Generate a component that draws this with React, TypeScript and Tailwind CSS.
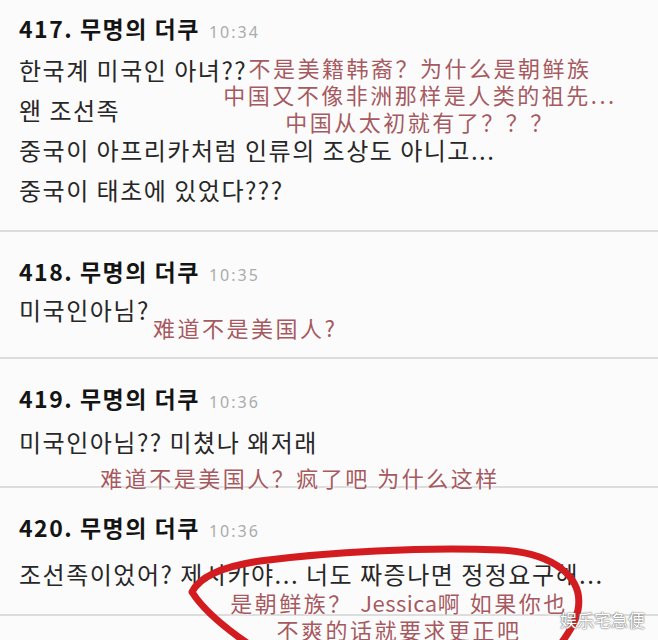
import React from "react";

function Header({ num, time }: { num: string; time: string }) {
  return (
    <div className="flex items-baseline gap-[9px] h-[28px] leading-[28px]">
      <span className="font-['Noto_Sans_CJK_KR','Noto_Sans_CJK_SC',sans-serif] font-bold text-[23px] tracking-[1.5px] text-[#141414]">
        {num}. 무명의 더쿠
      </span>
      <span className="font-['Noto_Sans',sans-serif] text-[16px] tracking-[2px] text-[#ababab]">
        {time}
      </span>
    </div>
  );
}

function Body({ children }: { children: React.ReactNode }) {
  return (
    <div className="font-['Noto_Sans_CJK_KR','Noto_Sans_CJK_SC',sans-serif] text-[24px] tracking-[1.5px] leading-[40px] text-[#272727] whitespace-nowrap">
      {children}
    </div>
  );
}

function Zh({ children }: { children: React.ReactNode }) {
  return (
    <div className="font-['Noto_Sans_CJK_SC','Noto_Sans_CJK_KR',sans-serif] text-[22px] tracking-[2.5px] leading-[27px] text-[#a65a5f] whitespace-nowrap [text-shadow:0_0_3px_#fff,0_0_6px_#fff]">
      {children}
    </div>
  );
}

export default function App() {
  return (
    <div className="relative w-[658px] h-[640px] overflow-hidden bg-[#fcfbfc]">
      {/* 417 */}
      <section className="relative pl-[19px] pt-[14px] pb-[20px] border-b-2 border-[#dcdcdc]">
        <Header num="417" time="10:34" />
        <div className="mt-[8px]">
          <Body>한국계 미국인 아녀??</Body>
          <Body>왠 조선족</Body>
          <Body>중국이 아프리카처럼 인류의 조상도 아니고...</Body>
          <Body>중국이 태초에 있었다???</Body>
        </div>
        <div className="absolute left-[200px] top-[54px] w-[440px] text-center">
          <Zh>不是美籍韩裔？为什么是朝鲜族</Zh>
          <Zh>中国又不像非洲那样是人类的祖先...</Zh>
          <Zh>中国从太初就有了？？？</Zh>
        </div>
      </section>

      {/* 418 */}
      <section className="relative pl-[19px] pt-[25px] pb-[27px] border-b-2 border-[#dcdcdc]">
        <Header num="418" time="10:35" />
        <div className="mt-[5px]">
          <Body>미국인아님?</Body>
        </div>
        <div className="absolute left-[153px] top-[82px]">
          <Zh>难道不是美国人?</Zh>
        </div>
      </section>

      {/* 419 */}
      <section className="relative pl-[19px] pt-[25px] pb-[24px] border-b-2 border-[#dcdcdc]">
        <Header num="419" time="10:36" />
        <div className="mt-[10px]">
          <Body>미국인아님?? 미쳤나 왜저래</Body>
        </div>
        <div className="absolute left-[80px] top-[105px] w-[440px] text-center">
          <Zh>难道不是美国人？疯了吧 为什么这样</Zh>
        </div>
      </section>

      {/* 420 */}
      <section className="relative pl-[19px] pt-[25px] pb-[20px] border-b-2 border-[#dcdcdc]">
        <Header num="420" time="10:36" />
        <div className="mt-[13px]">
          <Body>조선족이었어? 제시카야... 너도 짜증나면 정정요구해...</Body>
        </div>
        <div className="absolute left-[179px] top-[101px] w-[440px] text-center">
          <Zh>
            是朝鲜族？ <span className="tracking-[0.5px]">Jessica</span>啊 如果你也
          </Zh>
          <Zh>不爽的话就要求更正吧</Zh>
        </div>
      </section>

      {/* red hand-drawn circle */}
      <svg
        className="absolute left-0 top-0 pointer-events-none"
        width="658"
        height="640"
        viewBox="0 0 658 640"
      >
        <path
          d="M 250 645 C 225 628, 202 608, 192 592 C 200 576, 225 566, 260 561 C 330 552, 420 547, 500 550 C 555 553, 584 578, 578 610 C 575 625, 566 636, 558 648"
          fill="none"
          stroke="#d21c1f"
          strokeWidth="7"
          strokeLinecap="round"
          strokeLinejoin="round"
        />
      </svg>

      {/* watermark */}
      <div className="absolute left-[560px] top-[609px] font-['Noto_Sans_CJK_SC',sans-serif] text-[17px] leading-[22px] text-white [text-shadow:0_0_1px_#555,0_0_2px_#777]">
        娱乐宅急便
      </div>
    </div>
  );
}
